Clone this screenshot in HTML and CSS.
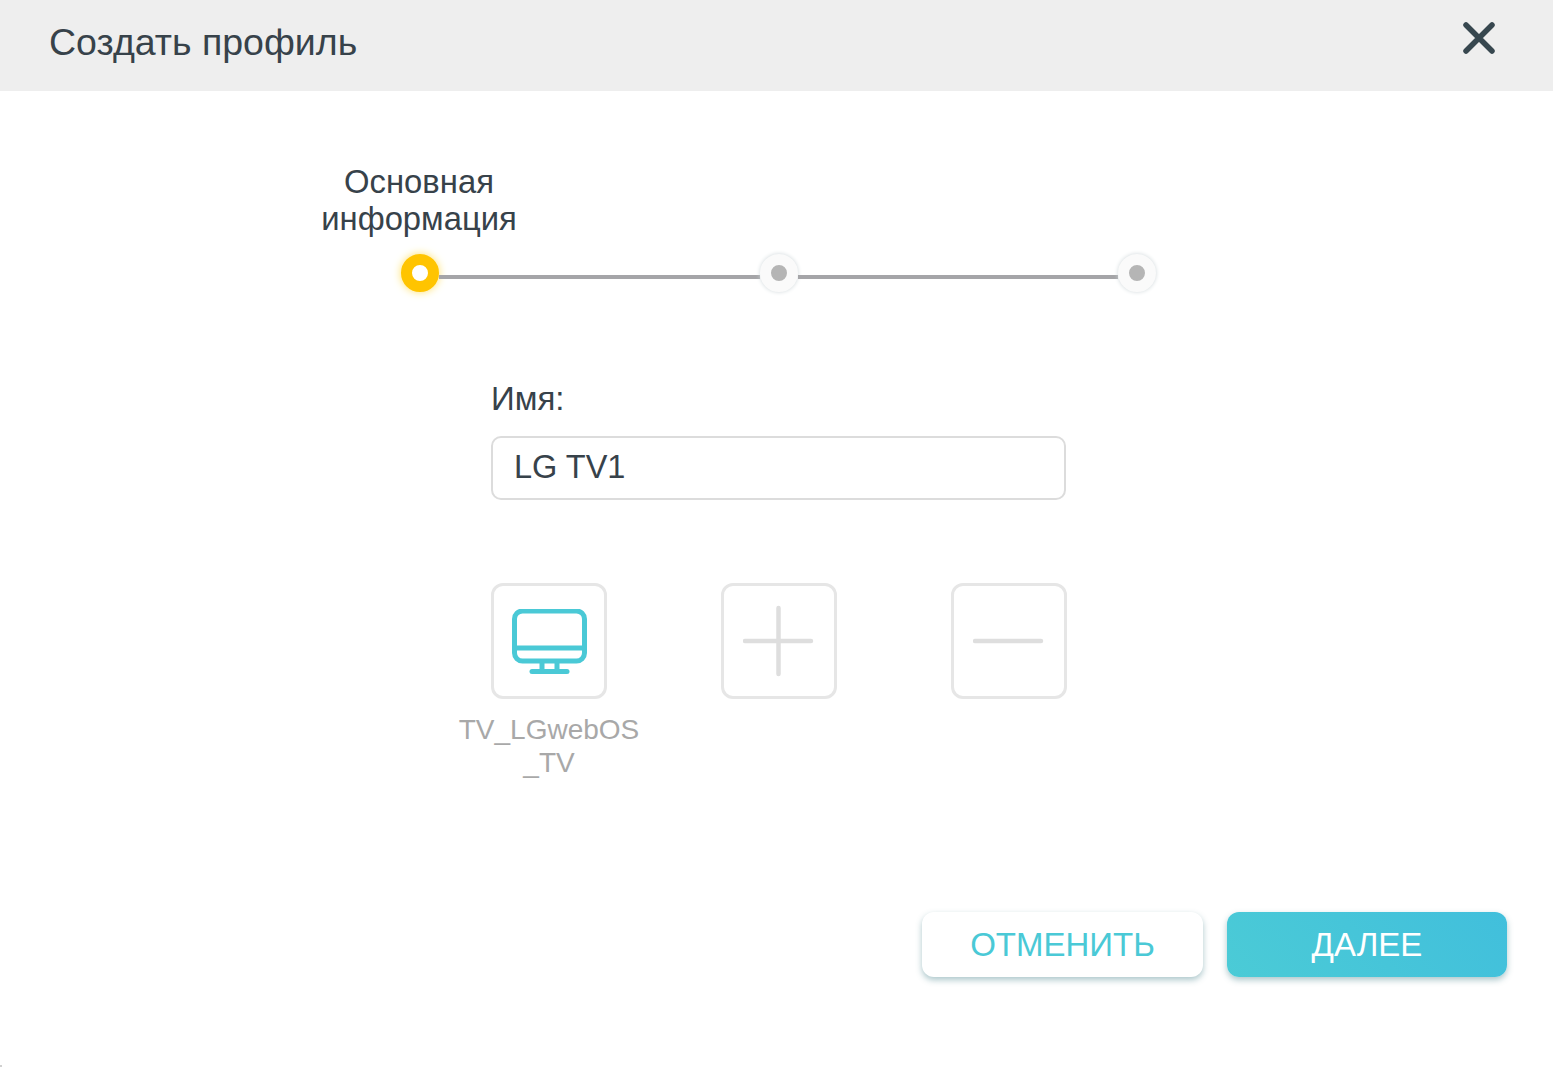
FILE: index.html
```html
<!DOCTYPE html>
<html lang="ru">
<head>
    <meta charset="UTF-8">
    <title>Создать профиль</title>
    <link rel="stylesheet" href="styles.css">
</head>
<body>
    <div class="header">
        <div class="title">Создать профиль</div>
        <svg class="close" width="32" height="32" viewBox="0 0 32 32">
            <path d="M3 3 L29 29 M29 3 L3 29" stroke="#37474f" stroke-width="5.5" stroke-linecap="round"/>
        </svg>
    </div>

    <div class="content">
        <div class="stepper">
            <div class="step-label">Основная информация</div>
            <div class="step-track">
                <span class="dot dot-active"></span>
                <span class="line"></span>
                <span class="dot"></span>
                <span class="line"></span>
                <span class="dot"></span>
            </div>
        </div>

        <div class="form">
            <label class="field-label">Имя:</label>
            <div class="input">LG TV1</div>

            <div class="tiles">
                <div class="tile-wrap">
                    <div class="tile">
                        <svg width="75" height="65" viewBox="0 0 75 65" fill="none" stroke="#4ac9d6" stroke-width="5">
                            <rect x="2.5" y="2" width="70" height="50" rx="8"/>
                            <path d="M2 39 H73 M30 52 V62 M45 52 V62"/>
                            <path d="M20 62.5 H55" stroke-linecap="round"/>
                        </svg>
                    </div>
                    <div class="tile-name">TV_LGwebOS<br>_TV</div>
                </div>
                <div class="tile-wrap">
                    <div class="tile">
                        <svg width="72" height="72" viewBox="0 0 72 72" stroke="#dedede" stroke-width="4.5" stroke-linecap="round">
                            <path d="M35.5 3 V69 M2 36 H68"/>
                        </svg>
                    </div>
                </div>
                <div class="tile-wrap">
                    <div class="tile">
                        <svg width="72" height="72" viewBox="0 0 72 72" stroke="#dedede" stroke-width="4.5" stroke-linecap="round">
                            <path d="M2 36 H68"/>
                        </svg>
                    </div>
                </div>
            </div>
        </div>

        <div class="buttons">
            <button class="btn btn-cancel">ОТМЕНИТЬ</button>
            <button class="btn btn-next">ДАЛЕЕ</button>
        </div>
    </div>
    <div class="corner"></div>
</body>
</html>
```

FILE: styles.css
```css
html, body {
    height: 100%;
}
body {
    margin: 0;
    background: white;
    font-family: "Liberation Sans", Arial, sans-serif;
    color: #37424a;
    overflow: hidden;
}
.header {
    display: flex;
    align-items: center;
    justify-content: space-between;
    box-sizing: border-box;
    height: 91px;
    padding: 0 58px 0 49px;
    background: #eeeeee;
}
.title {
    font-size: 37.5px;
    margin-bottom: 6px;
}
.close {
    margin-bottom: 15px;
}
.content {
    padding-top: 72px;
}
.stepper {
    margin-left: 401px;
    width: 755px;
}
.step-label {
    width: 210px;
    margin-left: -87px;
    font-size: 32.8px;
    line-height: 37px;
    text-align: center;
}
.step-track {
    display: flex;
    align-items: center;
    margin-top: 17px;
}
.dot {
    box-sizing: border-box;
    flex: none;
    width: 38px;
    height: 38px;
    border-radius: 50%;
    background: #b5b5b5;
    border: 11px solid #fafafa;
    box-shadow: 0 0 4px #cfd7da;
}
.dot-active {
    background: white;
    border: 11px solid #ffc400;
    box-shadow: 0 0 8px #ffe066;
}
.line {
    flex: 1;
    height: 4px;
    margin-top: 8px;
    background: #a5a5a8;
}
.form {
    width: 575px;
    margin: 88px 0 0 491px;
}
.field-label {
    display: block;
    font-size: 33px;
    line-height: 37px;
}
.input {
    box-sizing: border-box;
    height: 64px;
    margin-top: 19px;
    padding-left: 21px;
    border: 2px solid #dcdcdc;
    border-radius: 10px;
    font-size: 32.5px;
    line-height: 58px;
}
.tiles {
    display: flex;
    gap: 114px;
    margin-top: 83px;
}
.tile-wrap {
    flex: none;
    width: 116px;
}
.tile {
    box-sizing: border-box;
    display: flex;
    align-items: center;
    justify-content: center;
    width: 116px;
    height: 116px;
    border: 3px solid #e6e6e6;
    border-radius: 12px;
}
.tile-name {
    width: 200px;
    margin: 14px 0 0 -42px;
    font-size: 28px;
    line-height: 33px;
    color: #a8a8a8;
    text-align: center;
}
.buttons {
    position: absolute;
    right: 46px;
    bottom: 90px;
    display: flex;
    gap: 24px;
}
.btn {
    width: 281px;
    height: 65px;
    border: none;
    border-radius: 12px;
    font-family: inherit;
    font-size: 33px;
}
.btn-cancel {
    background: white;
    color: #4ac9d6;
    box-shadow: 0 3px 6px rgba(70, 130, 140, 0.45);
}
.btn-next {
    width: 280px;
    background: linear-gradient(45deg, #4bcbd6, #41bfdc);
    color: white;
    box-shadow: 0 3px 6px rgba(70, 130, 140, 0.45);
}
.corner {
    position: absolute;
    left: 0;
    bottom: 0;
    width: 2px;
    height: 2px;
    background: #d0d0d0;
}
```
